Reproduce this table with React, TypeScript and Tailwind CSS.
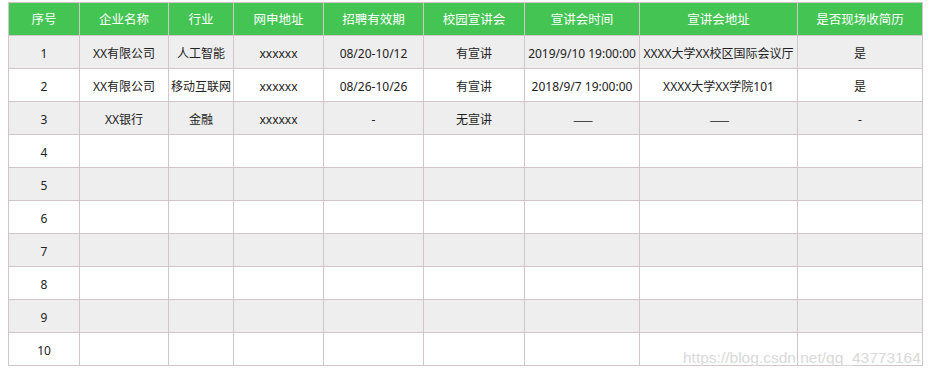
const COLS = [
  { label: "序号", w: "w-[71px]" },
  { label: "企业名称", w: "w-[89px]" },
  { label: "行业", w: "w-[65px]" },
  { label: "网申地址", w: "w-[90px]" },
  { label: "招聘有效期", w: "w-[100px]" },
  { label: "校园宣讲会", w: "w-[101px]" },
  { label: "宣讲会时间", w: "w-[115px]" },
  { label: "宣讲会地址", w: "w-[158px]" },
  { label: "是否现场收简历", w: "w-[125px]" },
];

const ROWS: string[][] = [
  ["1", "XX有限公司", "人工智能", "xxxxxx", "08/20-10/12", "有宣讲", "2019/9/10 19:00:00", "XXXX大学XX校区国际会议厅", "是"],
  ["2", "XX有限公司", "移动互联网", "xxxxxx", "08/26-10/26", "有宣讲", "2018/9/7 19:00:00", "XXXX大学XX学院101", "是"],
  ["3", "XX银行", "金融", "xxxxxx", "-", "无宣讲", "——", "——", "-"],
  ["4"], ["5"], ["6"], ["7"], ["8"], ["9"], ["10"],
];

export default function App() {
  return (
    <div className="relative w-[937px] h-[380px] bg-white pl-2 pt-[2px] font-['Noto_Sans','Noto_Sans_CJK_SC',sans-serif] text-[12px] text-[#222]">
      <table className="table-fixed border-collapse w-[915px]">
        <colgroup>
          {COLS.map((c) => (
            <col key={c.label} className={c.w} />
          ))}
        </colgroup>
        <thead>
          <tr className="bg-[#44c553] h-[33px]">
            {COLS.map((c) => (
              <th key={c.label} className="border border-[#d3c5c9] text-white font-normal text-[12.5px] p-0 pt-[2px] whitespace-nowrap">
                {c.label}
              </th>
            ))}
          </tr>
        </thead>
        <tbody>
          {ROWS.map((r, i) => (
            <tr key={i} className={`h-[33px] ${i % 2 === 0 ? "bg-[#eeeeee]" : "bg-white"}`}>
              {COLS.map((c, j) => (
                <td
                  key={c.label}
                  className={`border border-[#d3c5c9] text-center p-0 pt-[3px] whitespace-nowrap overflow-hidden ${
                    r[j] === "——" ? "font-['Noto_Sans_CJK_SC',sans-serif] tracking-[-2px]" : ""
                  }`}
                >
                  {r[j] ?? ""}
                </td>
              ))}
            </tr>
          ))}
        </tbody>
      </table>

      {/* csdn watermark */}
      <span className="absolute left-[683px] top-[346px] text-[15.5px] text-[#d9d9d9] font-['Liberation_Sans',sans-serif] [text-shadow:0_0_1px_#fff]">
        https://blog.csdn.net/qq_43773164
      </span>
    </div>
  );
}
